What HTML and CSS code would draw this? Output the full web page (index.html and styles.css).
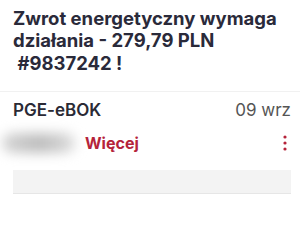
FILE: index.html
```html
<!DOCTYPE html>
<html lang="pl">
<head>
<meta charset="utf-8">
<link rel="stylesheet" href="styles.css">
</head>
<body>
<div class="title">Zwrot energetyczny wymaga działania - 279,79 PLN<br>&nbsp;#9837242 !</div>
<div class="sep"></div>
<div class="head">
  <span class="sender">PGE-eBOK</span>
  <span class="date">09 wrz</span>
</div>
<div class="preview">
  <div class="blurred"></div>
  <span class="more">Więcej</span>
  <svg class="dots" width="4" height="16" viewBox="0 0 4 16"><circle cx="2" cy="2" r="1.6"/><circle cx="2" cy="8" r="1.6"/><circle cx="2" cy="14" r="1.6"/></svg>
</div>
<div class="band"></div>
</body>
</html>
```
FILE: styles.css
```css
html, body {
  margin: 0;
  background: #fff;
}
body {
  width: 300px;
  height: 225px;
  overflow: hidden;
  font-family: Inter, "Noto Sans", sans-serif;
}
.title {
  padding: 7px 20px 0 13px;
  font-weight: 700;
  font-size: 18.5px;
  line-height: 22.3px;
  color: #2a2a3a;
  box-sizing: border-box;
  height: 91px;
}
.sep {
  height: 1px;
  background: #f1f1f1;
}
.head {
  display: flex;
  justify-content: space-between;
  align-items: baseline;
  padding: 8px 9px 0 13px;
}
.sender {
  font-weight: 600;
  font-size: 17px;
  color: #2a2a35;
}
.date {
  font-size: 17px;
  color: #555;
}
.preview {
  display: flex;
  align-items: center;
  height: 30px;
  margin-top: 8px;
  padding: 0 13px 0 2px;
}
.blurred {
  width: 74px;
  height: 20px;
  background: linear-gradient(90deg, #d6d6d6, #bdbdbd 50%, #d0d0d0 80%, #e4e4e4);
  border-radius: 10px;
  filter: blur(6px);
  margin-right: 9px;
}
.more {
  font-weight: 700;
  font-size: 16px;
  color: #b5233a;
}
.dots {
  margin-left: auto;
  fill: #b5233a;
}
.band {
  margin: 12px 9px 0 13px;
  height: 23px;
  background: #f3f3f3;
  border-bottom: 1px solid #e6e6e6;
}
```
